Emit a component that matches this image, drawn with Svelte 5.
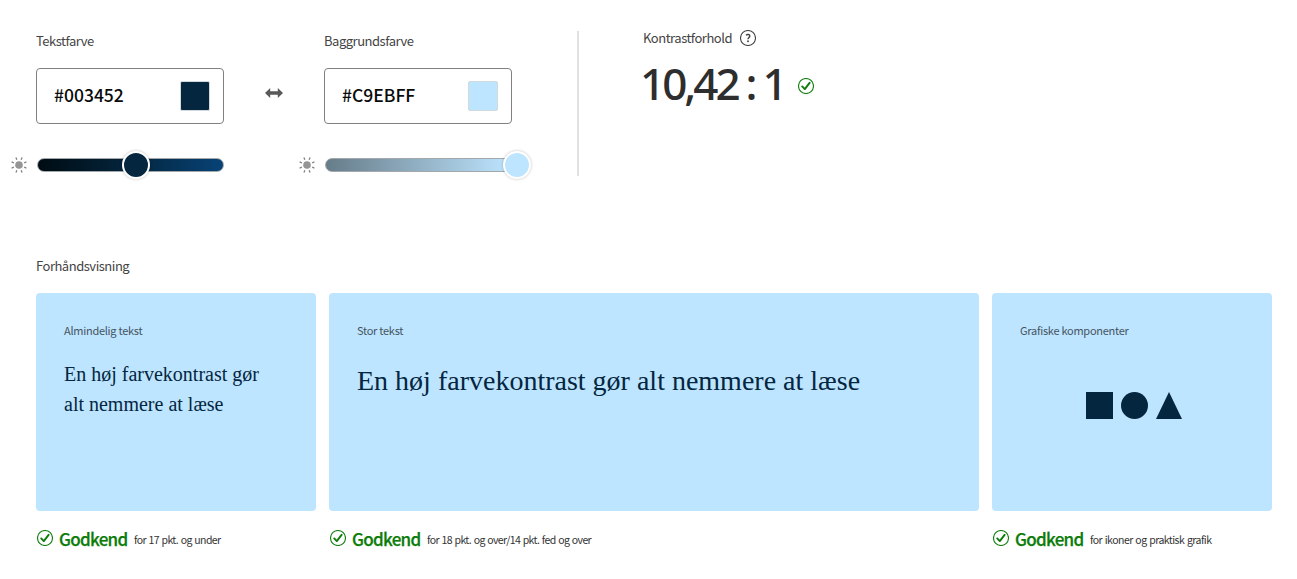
<script>
  const colors = [
    { label: 'Tekstfarve', value: '#003452', kind: 'dark' },
    { label: 'Baggrundsfarve', value: '#C9EBFF', kind: 'light' }
  ];
  const rays = [22.5, 67.5, 112.5, 157.5, 202.5, 247.5, 292.5, 337.5];
</script>

{#snippet check()}
  <svg class="check" width="16" height="16" viewBox="0 0 16 16" fill="none">
    <circle cx="8" cy="8" r="7.5" stroke="#128010" stroke-width="1.1" />
    <path d="M4.2 8.4 6.8 11.1 11.6 4.8" stroke="#0b7c08" stroke-width="1.9" stroke-linecap="round" stroke-linejoin="round" />
  </svg>
{/snippet}

{#snippet field(c)}
  <div class="field">
    <div class="label">{c.label}</div>
    <div class="input">
      <span class="hex">{c.value}</span>
      <span class="swatch {c.kind}"></span>
    </div>
    <div class="slider">
      <svg class="sun" width="16" height="16" viewBox="0 0 16 16">
        <circle cx="8" cy="8" r="3.8" fill="#959595" />
        {#each rays as r}
          <path d="M8 0V2.4" transform="rotate({r} 8 8)" stroke="#808080" stroke-width="1.3" />
        {/each}
      </svg>
      <div class="track {c.kind}-track"><span class="thumb {c.kind}-thumb"></span></div>
    </div>
  </div>
{/snippet}

<main>
  <section class="top">
    {@render field(colors[0])}
    <svg class="swap" width="18" height="12" viewBox="0 0 18 12">
      <path d="M0 6 5.2 0.9V4.3H12.8V0.9L18 6 12.8 11.1V7.7H5.2V11.1Z" fill="#595959" />
    </svg>
    {@render field(colors[1])}
    <div class="divider"></div>
    <div class="ratio">
      <div class="ratio-head">
        <span class="ratio-label">Kontrastforhold</span>
        <svg width="16" height="16" viewBox="0 0 16 16" fill="none">
          <circle cx="8" cy="8" r="7.5" stroke="#444" stroke-width="1.1" />
          <path d="M6 5.1C7.5 4 9.9 4.4 9.8 6.1 9.7 7.4 8 7.5 8 9.2" stroke="#444" stroke-width="1.4" />
          <circle cx="8" cy="11.3" r="0.95" fill="#444" />
        </svg>
      </div>
      <div class="ratio-value"><span class="number">10,42 : 1</span>{@render check()}</div>
    </div>
  </section>

  <h2>Forhåndsvisning</h2>
  <section class="cards">
    <article>
      <div class="card">
        <div class="caption">Almindelig tekst</div>
        <p class="regular">En høj farvekontrast gør<br />alt nemmere at læse</p>
      </div>
      <div class="status">{@render check()}<b>Godkend</b><span>for 17 pkt. og under</span></div>
    </article>
    <article>
      <div class="card">
        <div class="caption">Stor tekst</div>
        <p class="large">En høj farvekontrast gør alt nemmere at læse</p>
      </div>
      <div class="status">{@render check()}<b>Godkend</b><span>for 18 pkt. og over/14 pkt. fed og over</span></div>
    </article>
    <article>
      <div class="card">
        <div class="caption">Grafiske komponenter</div>
        <svg class="shapes" width="96" height="27" viewBox="0 0 96 27" fill="#04263f">
          <rect width="27" height="27" />
          <circle cx="48.5" cy="13.5" r="13.5" />
          <path d="M83 0 96 27H70Z" />
        </svg>
      </div>
      <div class="status">{@render check()}<b>Godkend</b><span class="graphics">for ikoner og praktisk grafik</span></div>
    </article>
  </section>
</main>

<style>
  :global(body) { background: #fff; }
  main {
    box-sizing: border-box;
    width: 1297px;
    height: 579px;
    padding: 31px 25px 0 36px;
    overflow: hidden;
    background: #fff;
    color: #444;
    font-family: "Noto Sans CJK SC", "Noto Sans", sans-serif;
  }
  svg { display: block; flex: none; }
  .top { display: flex; height: 225px; }
  .field { width: 188px; }
  .label { height: 20px; margin-bottom: 17px; font-size: 13px; line-height: 20px; letter-spacing: -0.48px; white-space: nowrap; }
  .input {
    box-sizing: border-box;
    display: flex;
    align-items: center;
    justify-content: space-between;
    width: 188px;
    height: 56px;
    padding: 0 13px 0 17px;
    border: 1px solid #808080;
    border-radius: 4px;
  }
  .hex { margin-top: -2px; color: #0a0a0a; font-size: 17.5px; line-height: 24px; font-weight: 500; white-space: nowrap; }
  .swatch { box-sizing: border-box; width: 30px; height: 30px; border: 1px solid #d3d9dd; border-radius: 2px; }
  .dark { background: #04263f; }
  .light { background: #bee5ff; }
  .slider { display: flex; align-items: center; gap: 10px; height: 28px; margin: 27px 0 0 -25px; }
  .track {
    box-sizing: border-box;
    position: relative;
    flex: none;
    width: 187px;
    height: 14px;
    border: 1px solid #a5a8aa;
    border-radius: 7px;
  }
  .dark-track { background: linear-gradient(90deg, #000c13, #04263f 52%, #074377); }
  .light-track { background: linear-gradient(90deg, #667c89, #bee5ff); }
  .thumb {
    position: absolute;
    top: -8px;
    box-sizing: border-box;
    width: 28px;
    height: 28px;
    border: 2px solid #fff;
    border-radius: 50%;
    box-shadow: 0 0 3px rgba(0, 0, 0, 0.25);
  }
  .dark-thumb { left: 84px; background: #04263f; }
  .light-thumb { left: 177px; background: #bee5ff; }
  .swap { margin: 56px 41px 0; }
  .divider { width: 2px; height: 145px; margin-left: 65px; background: #e0e0e0; }
  .ratio { padding-left: 64px; }
  .ratio-head { display: flex; align-items: center; gap: 8px; height: 14px; }
  .ratio-label { width: 89px; font-size: 13px; line-height: 14px; letter-spacing: -0.48px; white-space: nowrap; }
  .ratio-value { display: flex; align-items: center; height: 60px; margin-top: 11px; }
  .number {
    width: 158px;
    margin: -6px 0 0 -3px;
    color: #2e2e2e;
    font-family: "Noto Sans", sans-serif;
    font-size: 44px;
    line-height: 60px;
    font-weight: 500;
    letter-spacing: -3px;
    word-spacing: -0.5px;
    white-space: nowrap;
  }
  h2 { height: 20px; margin: 0 0 17px; font-size: 13px; line-height: 20px; font-weight: 400; letter-spacing: -0.48px; }
  .cards { display: grid; grid-template-columns: 280px 650px 280px; gap: 13px; }
  .card { box-sizing: border-box; height: 218px; padding: 27px 28px 0; border-radius: 4px; background: #bee5ff; }
  .caption { height: 20px; color: #44545f; font-size: 11px; line-height: 20px; letter-spacing: -0.27px; white-space: nowrap; }
  p { margin: 0; color: #04263f; font-family: "Liberation Serif", serif; white-space: nowrap; }
  .regular { margin-top: 19px; font-size: 20px; line-height: 30px; }
  .large { margin-top: 23px; font-size: 28px; line-height: 36px; }
  .shapes { margin: 52px 0 0 66px; }
  .status { display: flex; align-items: center; height: 24px; margin: 15px 0 0 1px; white-space: nowrap; }
  b {
    width: 67px;
    margin: 1px 8px 0 6px;
    color: #0b7c08;
    font-size: 17px;
    line-height: 24px;
    font-weight: 500;
    letter-spacing: -0.7px;
    -webkit-text-stroke: 0.25px #0b7c08;
  }
  .status span { margin-top: 3px; color: #333; font-size: 10.5px; line-height: 20px; letter-spacing: -0.6px; word-spacing: 0.8px; }
  .status .graphics { letter-spacing: -0.53px; }
</style>
